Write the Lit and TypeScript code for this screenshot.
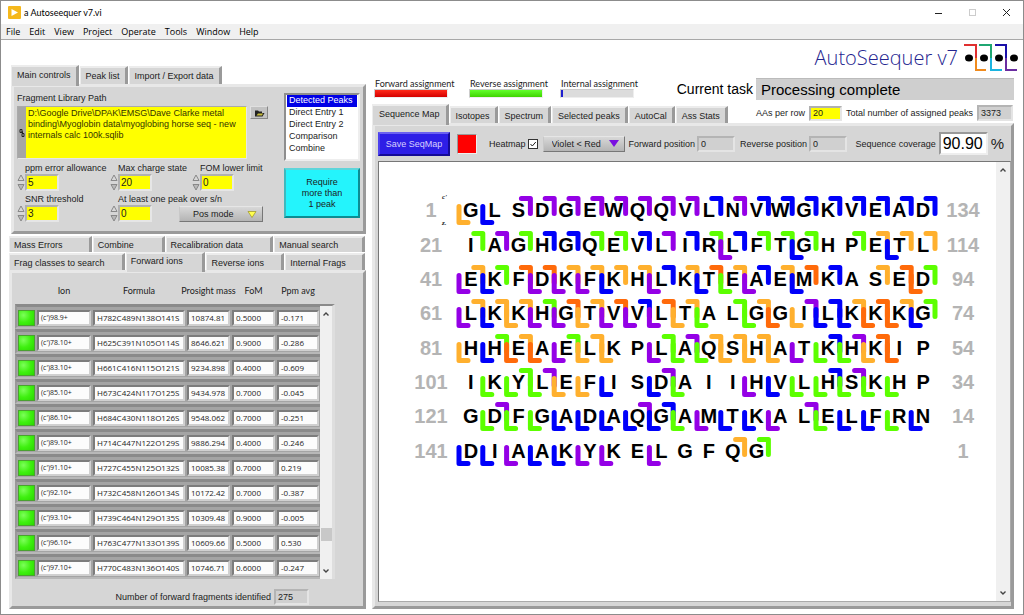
import { LitElement, html, svg, css, nothing } from "lit";
import { customElement, property } from "lit/decorators.js";
import { classMap } from "lit/directives/class-map.js";

const COLOURS: Record<string, string> = {
  P: "#9400e6",
  B: "#0000fa",
  O: "#ffb02e",
  R: "#ff6a0a",
  G: "#5cff00",
};

interface SequenceRow {
  start: number;
  end: number;
  residues: string;
  // one character per cleavage site, left to right; "." is no fragment
  forward: string;
  reverse: string;
}

const SEQUENCE: SequenceRow[] = [
  { start: 1, end: 134, residues: "GLSDGEWQQVLNVWGKVEAD", forward: "...PPPPPPPPBPBBBBBBBB", reverse: "OB..................." },
  { start: 21, end: 114, residues: "IAGHGQEVLIRLFTGHPETL", forward: ".GPGBBGGBPBGBGGG.GOOO", reverse: "...........P..B...B.." },
  { start: 41, end: 94, residues: "EKFDKFKHLKTEAEMKASED", forward: ".OGRROOOOBOROBORB.ORG", reverse: "PB.PPPB.P.BGP.B....R." },
  { start: 61, end: 74, residues: "LKKHGTVVLTALGGILKKKG", forward: ".OOOGRORBRO.GO.PBOROG", reverse: "PBOPPOPPPOG.GROBBRRB." },
  { start: 81, end: 54, residues: "HHEAELKPLAQSHATKHKIP", forward: "..GO.GO..GPOOO..BPR..", reverse: "OBRRPOO.PGGOOOPGGOR.." },
  { start: 101, end: 34, residues: "IKYLEFISDAIIHVLHSKHP", forward: "...GP....P......BP...", reverse: ".GGGOOB.BG..PBGGGGG.." },
  { start: 121, end: 14, residues: "GDFGADAQGAMTKALELFRN", forward: "..P.....PB.....P.....", reverse: ".GGGBBBBBGPBBP.GBBGB." },
  { start: 141, end: 1, residues: "DIAAKYKELGFQG", forward: "............OG.......", reverse: "BBPBBPP.P............" },
];

const IONS = [
  ["(c')98.9+", "H782C489N138O141S", "10874.81", "0.5000", "-0.171"],
  ["(c')78.10+", "H625C391N105O114S", "8646.621", "0.9000", "-0.286"],
  ["(c')83.10+", "H661C416N115O121S", "9234.898", "0.4000", "-0.609"],
  ["(c')85.10+", "H673C424N117O125S", "9434.978", "0.7000", "-0.045"],
  ["(c')86.10+", "H684C430N118O126S", "9548.062", "0.7000", "-0.251"],
  ["(c')89.10+", "H714C447N122O129S", "9886.294", "0.4000", "-0.246"],
  ["(c')91.10+", "H727C455N125O132S", "10085.38", "0.7000", "0.219"],
  ["(c')92.10+", "H732C458N126O134S", "10172.42", "0.7000", "-0.387"],
  ["(c')93.10+", "H739C464N129O135S", "10309.48", "0.9000", "-0.005"],
  ["(c')96.10+", "H763C477N133O139S", "10609.66", "0.5000", "0.530"],
  ["(c')97.10+", "H770C483N136O140S", "10746.71", "0.6000", "-0.247"],
];

const base = css`
  * {
    box-sizing: border-box;
  }
  button,
  input,
  select,
  textarea {
    font: inherit;
    color: inherit;
    margin: 0;
    padding: 0;
    border: 0;
    border-radius: 0;
    outline: 0;
    background: none;
    min-width: 0;
  }
  svg {
    display: block;
  }
`;

@customElement("sequence-map")
export class SequenceMap extends LitElement {
  static styles = [
    base,
    css`
      :host {
        display: grid;
        grid-template-rows: repeat(8, 1fr);
        height: 275px;
        padding: 0 0 0 28px;
        font: bold 20px/34px "Liberation Sans", Arial, sans-serif;
      }
      .row {
        display: grid;
        grid-template-columns: 48px 476px 48px;
        column-gap: 4px;
        align-items: center;
        position: relative;
      }
      .count {
        text-align: center;
        color: #b4b4b4;
      }
      .strip {
        position: relative;
        display: grid;
        grid-template-columns: repeat(20, 1fr);
        text-align: center;
        color: #000;
      }
      .marks {
        position: absolute;
        inset: 0;
        width: 100%;
        height: 34px;
        overflow: visible;
      }
      .terminus {
        position: absolute;
        left: 35px;
        top: 0;
        height: 34px;
        display: flex;
        flex-direction: column;
        justify-content: space-between;
        font: italic bold 7px/8px "Liberation Serif", serif;
      }
    `,
  ];

  private marks(row: SequenceRow) {
    return Array.from({ length: 21 }, (_, i) => {
      const x = i * 23.8;
      const f = COLOURS[row.forward[i]];
      const r = COLOURS[row.reverse[i]];
      return svg`
        ${f ? svg`<path d="M${x - 9} 5.5H${x}V20.5" stroke=${f} />` : nothing}
        ${r ? svg`<path d="M${x} 13.5V29.5H${x + 9}" stroke=${r} />` : nothing}
      `;
    });
  }

  render() {
    return SEQUENCE.map(
      (row, i) => html`
        <div class="row">
          <span class="count">${row.start}</span>
          ${i === 0 ? html`<span class="terminus"><span>c'</span><span>z.</span></span>` : nothing}
          <div class="strip">
            ${[...row.residues].map((c) => html`<span>${c}</span>`)}
            <svg class="marks" viewBox="0 0 476 34" fill="none" stroke-width="5" stroke-linecap="round" stroke-linejoin="round">
              ${this.marks(row)}
            </svg>
          </div>
          <span class="count">${row.end}</span>
        </div>
      `
    );
  }
}

@customElement("spin-field")
export class SpinField extends LitElement {
  @property() label = "";
  @property() value = "";

  static styles = [
    base,
    css`
      :host {
        display: block;
        line-height: 12px;
      }
      label {
        display: block;
        padding-left: 8px;
        white-space: nowrap;
      }
      .field {
        display: flex;
        height: 17px;
      }
      .spin {
        display: grid;
        width: 8px;
      }
      .spin button {
        display: grid;
        place-items: center;
      }
      input {
        width: 34px;
        background: #ffff00;
        border: 2px solid;
        border-color: #b0b0b0 #e6e6e6 #e6e6e6 #b0b0b0;
        padding-left: 1px;
        font-size: 10px;
      }
    `,
  ];

  render() {
    return html`
      <label for="v">${this.label}</label>
      <div class="field">
        <span class="spin">
          <button aria-label="Increase">
            <svg width="8" height="8"><path d="M4 1L7 6.5H1Z" fill="#d8d8d8" stroke="#888" /></svg>
          </button>
          <button aria-label="Decrease">
            <svg width="8" height="8"><path d="M4 7L7 1.5H1Z" fill="#b8b8b8" stroke="#888" /></svg>
          </button>
        </span>
        <input id="v" .value=${this.value} />
      </div>
    `;
  }
}

@customElement("app-root")
export class AppRoot extends LitElement {
  static styles = [
    base,
    css`
      :host {
        display: flex;
        flex-direction: column;
        min-height: 100vh;
        background: #fff;
        border: 1px solid #8c8c8c;
        box-sizing: border-box;
        color: #1c1c1c;
        font: 9px/12px "Liberation Sans", Arial, sans-serif;
      }
      * {
        white-space: nowrap;
      }
      .titlebar {
        display: flex;
        align-items: center;
        height: 23px;
        padding: 0 1px 0 7px;
        gap: 3px;
        font: 9px/12px Lato, "Open Sans", sans-serif;
        color: #000;
      }
      .titlebar h1 {
        font: inherit;
        margin: 0;
        flex: 1;
      }
      .window-button {
        width: 31px;
        height: 22px;
        display: grid;
        place-items: center;
      }
      .menubar {
        display: flex;
        gap: 9px;
        height: 16px;
        padding-left: 5px;
        background: #f0f0f0;
        border-bottom: 1px solid #a8a8a8;
        font: 9px/14px "Open Sans", "Noto Sans", sans-serif;
        color: #000;
      }
      .workspace {
        flex: 1;
        display: grid;
        grid-template-columns: minmax(0, 357fr) minmax(0, 642fr);
        column-gap: 6px;
        padding: 0 9px 5px 8px;
      }
      .left {
        display: flex;
        flex-direction: column;
        padding-top: 25px;
      }
      .right {
        display: flex;
        flex-direction: column;
      }

      .tabs {
        display: flex;
        gap: 1px;
        align-items: flex-end;
      }
      .tab {
        height: 18px;
        padding: 0 5px;
        background: #d6d6d6;
        border-top: 2px solid #ececec;
        border-left: 1px solid #ececec;
        border-right: 3px solid #9a9a9a;
        text-align: left;
      }
      .tab.on {
        height: 21px;
        margin-bottom: -2px;
        padding-bottom: 4px;
        position: relative;
      }
      .panel {
        background: #d6d6d6;
        border: 3px solid;
        border-color: #e8e8e8 #9a9a9a #9a9a9a #e8e8e8;
      }

      .controls {
        display: grid;
        grid-template-columns: minmax(0, 1fr) 76px;
        column-gap: 16px;
        height: 150px;
        margin: 0 0 0 2px;
        padding: 3px 3px 0 3px;
      }
      .first-tabs {
        margin-left: 2px;
      }
      .path {
        display: grid;
        grid-template-columns: 1fr 18px;
        column-gap: 3px;
        align-items: start;
      }
      .path label {
        grid-column: 1 / -1;
        line-height: 16px;
      }
      .path-box {
        display: grid;
        grid-template-columns: 8px 1fr;
        border: 1px solid #aaa;
        border-right-color: #e6e6e6;
        border-bottom-color: #e6e6e6;
        background: #a6a6a6;
        height: 53px;
        align-items: center;
      }
      .path-box textarea {
        background: #ffff00;
        height: 51px;
        resize: none;
        overflow: hidden;
        padding: 1px 2px;
        line-height: 11px;
        white-space: pre-wrap;
        color: #333300;
      }
      .browse {
        height: 13px;
        display: grid;
        place-items: center;
        background: #c2c2c2;
        border: 1px solid;
        border-color: #e0e0e0 #888 #888 #e0e0e0;
      }
      .numbers {
        display: grid;
        grid-template-columns: 93px 82px 1fr;
        margin-top: 3px;
      }
      .numbers.second {
        grid-template-columns: 93px 69px 84px;
        margin-top: 2px;
      }
      .drop {
        display: inline-grid;
        align-items: center;
      }
      .drop > * {
        grid-area: 1 / 1;
      }
      .drop svg {
        justify-self: end;
        margin-right: 6px;
        pointer-events: none;
      }
      .drop select {
        appearance: none;
        height: 16px;
        background: linear-gradient(#d8d8d8, #b4b4b4);
        border: 1px solid;
        border-color: #e6e6e6 #777 #777 #c8c8c8;
      }
      .mode {
        align-self: end;
      }
      .mode select {
        padding-left: 13px;
      }
      .side {
        display: flex;
        flex-direction: column;
        gap: 7px;
        padding-top: 3px;
      }
      .modes {
        height: 68px;
        background: #fff;
        border: 2px solid;
        border-color: #8e8e8e #eee #eee #8e8e8e;
        overflow: hidden;
        padding: 0 1px;
      }
      .modes option {
        padding: 0 2px;
        min-height: 0;
        height: 12px;
        line-height: 12px;
      }
      .modes option:checked {
        background: linear-gradient(#0000e6, #0000e6);
        color: #fff;
      }
      .require {
        height: 50px;
        background: #24f4fc;
        border: 2px solid;
        border-color: #5fd5da #0b8d92 #0b8d92 #3fb9be;
        line-height: 11px;
        text-align: center;
      }

      .fill {
        display: grid;
      }
      .fill .tab {
        height: 17px;
        padding-left: 4px;
      }
      .fill.ions-back .tab {
        height: 16px;
      }
      .ions-back {
        grid-template-columns: 83fr 72fr 108fr 91fr;
        margin-top: 2px;
        padding-right: 1px;
      }
      .ions-front {
        grid-template-columns: 116fr 80fr 78fr 80fr;
        padding-right: 1px;
      }
      .ions-front .tab.on {
        height: 20px;
      }
      .ions {
        flex: 1;
        padding: 7px 0 0 3px;
      }
      .ions-grid {
        display: grid;
        grid-template-columns: 305px 15px;
        align-items: stretch;
      }
      table {
        border-collapse: separate;
        border-spacing: 0;
        table-layout: fixed;
        width: 305px;
        font: 8px/12px "Open Sans", "Noto Sans", sans-serif;
      }
      th {
        font: 9px/12px Lato, "Open Sans", sans-serif;
        padding: 0 0 3px;
        height: 24px;
        text-align: center;
      }
      th span {
        display: flex;
        justify-content: center;
      }
      tbody td {
        height: 25px;
        padding: 2px 1px 0;
        background: #a4a4a4;
        border-top: 3px solid #8a8a8a;
        border-bottom: 2px solid #b8b8b8;
      }
      tbody td:first-child {
        border-left: 2px solid #999;
      }
      .cell {
        height: 16px;
        line-height: 12px;
        padding-left: 2px;
        background: #fcfcfc;
        border: 2px solid;
        border-color: #7c7c7c #d0d0d0 #d0d0d0 #7c7c7c;
      }
      .cell.small {
        font-size: 7px;
      }
      .led {
        height: 16px;
        background: radial-gradient(circle at 30% 30%, #7dff5a, #3ff010 50%, #2ad800);
        border: 1px solid #4aa030;
      }
      .scroll {
        display: flex;
        flex-direction: column;
        align-items: center;
        background: #f0f0f0;
      }
      .scroll button {
        height: 16px;
        display: grid;
        place-items: center;
      }
      .scroll .gap {
        flex: 1;
      }
      .ions-scroll {
        margin-top: 24px;
        border-top: 2px solid #8a8a8a;
        border-right: 3px solid #dedede;
      }
      .ions-scroll .thumb {
        width: 11px;
        height: 13px;
        background: #c8c8c8;
        margin-bottom: 22px;
      }
      .total {
        display: flex;
        justify-content: flex-end;
        align-items: center;
        gap: 3px;
        margin: 10px 54px 0 0;
      }
      .readout {
        background: #d0d0d0;
        border: 2px solid;
        border-color: #b4b4b4 #e4e4e4 #e4e4e4 #b4b4b4;
        padding-left: 2px;
        height: 16px;
      }
      .total .readout {
        width: 35px;
      }

      .brand {
        display: flex;
        justify-content: flex-end;
        align-items: center;
        gap: 6px;
        height: 36px;
        margin-right: -4px;
        color: #24248f;
        font: 20px/28px "Open Sans", "Noto Sans", sans-serif;
        font-weight: 300;
      }
      .status {
        display: grid;
        grid-template-columns: 93px 89px 90px 1fr;
        gap: 2px;
        height: 24px;
        align-items: end;
      }
      .meter-box {
        padding: 0 0 2px 2px;
      }
      .meter {
        font: 9px/10px Lato, "Open Sans", sans-serif;
        padding: 0 0 0 1px;
      }
      .bar {
        width: 74px;
        height: 9px;
        background: #dcdcdc;
        border: 1px solid;
        border-color: #ccc #eee #eee #ccc;
      }
      .bar span {
        display: block;
        height: 100%;
      }
      .task {
        display: flex;
        align-items: center;
        justify-content: flex-end;
        gap: 3px;
        font-size: 14px;
        color: #000;
      }
      .task output {
        width: 258px;
        height: 22px;
        font-size: 15px;
        line-height: 22px;
        padding-left: 5px;
        background: #cfcfcf;
        border-top: 1px solid #bbb;
      }
      .tab-line {
        display: flex;
        height: 23px;
        align-items: flex-end;
        justify-content: space-between;
      }
      .tab-line .tab {
        height: 17px;
      }
      .tab-line .tab.on {
        height: 21px;
        padding: 0 6px 4px 6px;
      }
      .stats {
        display: flex;
        align-items: center;
        gap: 4px;
        margin-bottom: 2px;
        padding-right: 1px;
      }
      .stats .rows {
        width: 33px;
        height: 15px;
        background: #ffff00;
        border: 2px solid;
        border-color: #b0b0b0 #e6e6e6 #e6e6e6 #b0b0b0;
        padding-left: 2px;
      }
      .stats .readout {
        width: 36px;
      }
      .map-panel {
        flex: 1;
        display: flex;
        flex-direction: column;
        padding: 0 0 4px 3px;
      }
      .toolbar {
        display: flex;
        align-items: center;
        height: 35px;
        padding: 0 7px 0 0;
      }
      .save {
        width: 72px;
        height: 24px;
        background: #2d1ee6;
        color: #d8d0ff;
        border: 2px solid;
        border-color: #6a60f0 #140a96 #140a96 #4c40ee;
      }
      .swatch {
        width: 20px;
        height: 20px;
        margin: 0 12px 0 7px;
        background: #ff0000;
        border: 1px solid;
        border-color: #999 #eee #eee #999;
      }
      .check {
        display: inline-grid;
        margin: 0 5px 0 2px;
      }
      .check > * {
        grid-area: 1 / 1;
      }
      .check input {
        appearance: none;
        width: 10px;
        height: 10px;
        background: #fff;
        border: 1px solid #333;
      }
      .check svg {
        pointer-events: none;
      }
      .heat {
        width: 82px;
        margin-right: 4px;
      }
      .heat select {
        padding-left: 8px;
      }
      .position {
        display: flex;
        align-items: center;
        gap: 2px;
        margin-right: 5px;
      }
      .position .readout {
        width: 38px;
      }
      .coverage {
        margin-left: auto;
        display: flex;
        align-items: center;
        gap: 3px;
      }
      .coverage input {
        width: 49px;
        height: 23px;
        font-size: 16px;
        color: #000;
        background: #fff;
        border: 2px solid;
        border-color: #999 #eee #eee #999;
        padding-left: 2px;
      }
      .coverage .percent {
        font-size: 15px;
      }
      .canvas {
        flex: 1;
        display: grid;
        grid-template-columns: 1fr 14px;
        background: #fff;
        border: 1px solid;
        border-color: #777 #aaa #aaa #777;
      }
      .canvas sequence-map {
        margin-top: 31px;
      }
    `,
  ];

  private tab(label: string, on = false) {
    return html`<button role="tab" aria-selected=${on ? "true" : "false"} class=${classMap({ tab: true, on })}>${label}</button>`;
  }

  private chevron(up: boolean) {
    return html`<svg width="8" height="6" fill="none" stroke="#444" stroke-width="1.4">
      <path d=${up ? "M1.5 4.5L4 2L6.5 4.5" : "M1.5 1.5L4 4L6.5 1.5"} />
    </svg>`;
  }

  private meter(label: string, colour: string, percent: number) {
    return html`<div class="meter-box">
      <div class="meter">${label}</div>
      <div class="bar" role="progressbar" aria-label=${label} aria-valuenow=${percent}>
        <span style="width:${percent}%;background:${colour}"></span>
      </div>
    </div>`;
  }

  private mainControls() {
    return html`
      <div class="tabs first-tabs" role="tablist">
        ${this.tab("Main controls", true)} ${this.tab("Peak list")} ${this.tab("Import / Export data")}
      </div>
      <section class="panel controls">
        <div>
          <div class="path">
            <label for="path">Fragment Library Path</label>
            <div class="path-box">
              <svg width="8" height="10" fill="none" stroke="#222"><path d="M2 1.5h2v3h-2zM4 5.5h2v3h-2zM4 3l1 3" /></svg>
              <textarea id="path" .value=${"D:\\Google Drive\\DPAK\\EMSG\\Dave Clarke metal binding\\Myoglobin data\\myoglobing horse seq - new internals calc 100k.sqlib"}></textarea>
            </div>
            <button class="browse" aria-label="Browse">
              <svg width="11" height="8"><path d="M1 7.5V1.5H4L5 2.5H8V4H10.5L8.5 7.5Z" fill="#222" /><path d="M2.5 6.5L4 4.5H9L8 6.5Z" fill="#c9bd3a" /></svg>
            </button>
          </div>
          <div class="numbers">
            <spin-field label="ppm error allowance" value="5"></spin-field>
            <spin-field label="Max charge state" value="20"></spin-field>
            <spin-field label="FOM lower limit" value="0"></spin-field>
          </div>
          <div class="numbers second">
            <spin-field label="SNR threshold" value="3"></spin-field>
            <spin-field label="At least one peak over s/n" value="0"></spin-field>
            <span class="drop mode">
              <select aria-label="Polarity"><option>Pos mode</option></select>
              <svg width="10" height="7"><path d="M1 .5H9L5 6.5Z" fill="#ffff50" stroke="#999020" stroke-width=".7" /></svg>
            </span>
          </div>
        </div>
        <div class="side">
          <select class="modes" size="5" aria-label="Data source">
            <option selected>Detected Peaks</option>
            <option>Direct Entry 1</option>
            <option>Direct Entry 2</option>
            <option>Comparison</option>
            <option>Combine</option>
          </select>
          <button class="require">Require<br />more than<br />1 peak</button>
        </div>
      </section>
    `;
  }

  private ionTable() {
    const heads = ["", "Ion", "Formula", "Prosight mass", "FoM", "Ppm avg"];
    return html`
      <div role="tablist">
        <div class="tabs fill ions-back">
          ${["Mass Errors", "Combine", "Recalibration data", "Manual search"].map((t) => this.tab(t))}
        </div>
        <div class="tabs fill ions-front">
          ${this.tab("Frag classes to search")} ${this.tab("Forward ions", true)} ${this.tab("Reverse ions")}
          ${this.tab("Internal Frags")}
        </div>
      </div>
      <section class="panel ions">
        <div class="ions-grid">
          <table>
            <colgroup>
              <col style="width:21px" />
              <col style="width:56px" />
              <col style="width:94px" />
              <col style="width:45px" />
              <col style="width:45px" />
              <col style="width:44px" />
            </colgroup>
            <thead>
              <tr>
                ${heads.map((h) => html`<th scope="col"><span>${h}</span></th>`)}
              </tr>
            </thead>
            <tbody>
              ${IONS.map(
                (ion) => html`<tr>
                  <td><div class="led"></div></td>
                  ${ion.map((v, i) => html`<td><div class=${classMap({ cell: true, small: i === 0 })}>${v}</div></td>`)}
                </tr>`
              )}
            </tbody>
          </table>
          <div class="scroll ions-scroll">
            <button aria-label="Scroll up">${this.chevron(true)}</button>
            <span class="gap"></span>
            <span class="thumb"></span>
            <button aria-label="Scroll down">${this.chevron(false)}</button>
          </div>
        </div>
        <div class="total">
          <label for="total">Number of forward fragments identified</label>
          <input id="total" class="readout" readonly value="275" />
        </div>
      </section>
    `;
  }

  render() {
    return html`
      <header class="titlebar">
        <svg width="13" height="13"><rect width="13" height="13" rx="1" fill="#f5b81c" /><path d="M3.5 3L10 6.5L3.5 10Z" fill="#fff" /></svg>
        <h1>a Autoseequer v7.vi</h1>
        <button class="window-button" aria-label="Minimize"><svg width="9" height="9" stroke="#222"><path d="M1 5.5H8" /></svg></button>
        <button class="window-button" aria-label="Maximize"><svg width="9" height="9" fill="none" stroke="#ccc"><rect x="1.5" y="1.5" width="6" height="6" /></svg></button>
        <button class="window-button" aria-label="Close"><svg width="9" height="9" stroke="#222"><path d="M1 1L8 8M8 1L1 8" /></svg></button>
      </header>
      <nav class="menubar">
        ${["File", "Edit", "View", "Project", "Operate", "Tools", "Window", "Help"].map((m) => html`<button>${m}</button>`)}
      </nav>
      <main class="workspace">
        <div class="left">${this.mainControls()} ${this.ionTable()}</div>
        <div class="right">
          <div class="brand">
            <span>AutoSeequer v7</span>
            <svg width="54" height="28" viewBox="0 0 54 28" fill="none" stroke-width="2">
              <path d="M0 1H12V14" stroke="#e03030" /><path d="M12 14V26H22" stroke="#f08a1c" />
              <path d="M15 1H27V14" stroke="#1fa672" /><path d="M27 14V26H38" stroke="#1ab4e0" />
              <path d="M31 1H42V14" stroke="#1a10a8" /><path d="M42 14V26H53" stroke="#6a2ca0" />
              <g fill="#000" stroke="none"><ellipse cx="5" cy="14" rx="4" ry="3.5" /><ellipse cx="20" cy="14" rx="4" ry="3.5" /><ellipse cx="35" cy="14" rx="4" ry="3.5" /><ellipse cx="50" cy="14" rx="4" ry="3.5" /></g>
            </svg>
          </div>
          <div class="status">
            ${this.meter("Forward assignment", "linear-gradient(#ff2a1a,#d40000)", 100)}
            ${this.meter("Reverse assignment", "linear-gradient(#62ff2c,#3fd400)", 100)}
            ${this.meter("Internal assignment", "#2020d0", 3)}
            <div class="task"><label for="task">Current task</label><output id="task">Processing complete</output></div>
          </div>
          <div class="tab-line">
            <div class="tabs" role="tablist">
              ${this.tab("Sequence Map", true)}
              ${["Isotopes", "Spectrum", "Selected peaks", "AutoCal", "Ass Stats"].map((t) => this.tab(t))}
            </div>
            <div class="stats">
              <label for="rows">AAs per row</label><input id="rows" class="rows" value="20" />
              <label for="peaks">Total number of assigned peaks</label><input id="peaks" class="readout" readonly value="3373" />
            </div>
          </div>
          <section class="panel map-panel">
            <div class="toolbar">
              <button class="save">Save SeqMap</button>
              <span class="swatch"></span>
              <label for="heat">Heatmap</label>
              <span class="check">
                <input id="heat" type="checkbox" checked />
                <svg width="10" height="10" fill="none" stroke="#222"><path d="M2.5 5L4.3 7L7.8 3" /></svg>
              </span>
              <span class="drop heat">
                <select aria-label="Heatmap colours"><option>Violet &lt; Red</option></select>
                <svg width="10" height="7"><path d="M0 0H10L5 7Z" fill="#7a10e0" /></svg>
              </span>
              <span class="position"><label for="fp">Forward position</label><input id="fp" class="readout" readonly value="0" /></span>
              <span class="position"><label for="rp">Reverse position</label><input id="rp" class="readout" readonly value="0" /></span>
              <span class="coverage">
                <label for="cov">Sequence coverage</label><input id="cov" readonly value="90.90" /><span class="percent">%</span>
              </span>
            </div>
            <div class="canvas">
              <sequence-map></sequence-map>
              <div class="scroll">
                <button aria-label="Scroll up">${this.chevron(true)}</button>
                <span class="gap"></span>
                <button aria-label="Scroll down">${this.chevron(false)}</button>
              </div>
            </div>
          </section>
        </div>
      </main>
    `;
  }
}
